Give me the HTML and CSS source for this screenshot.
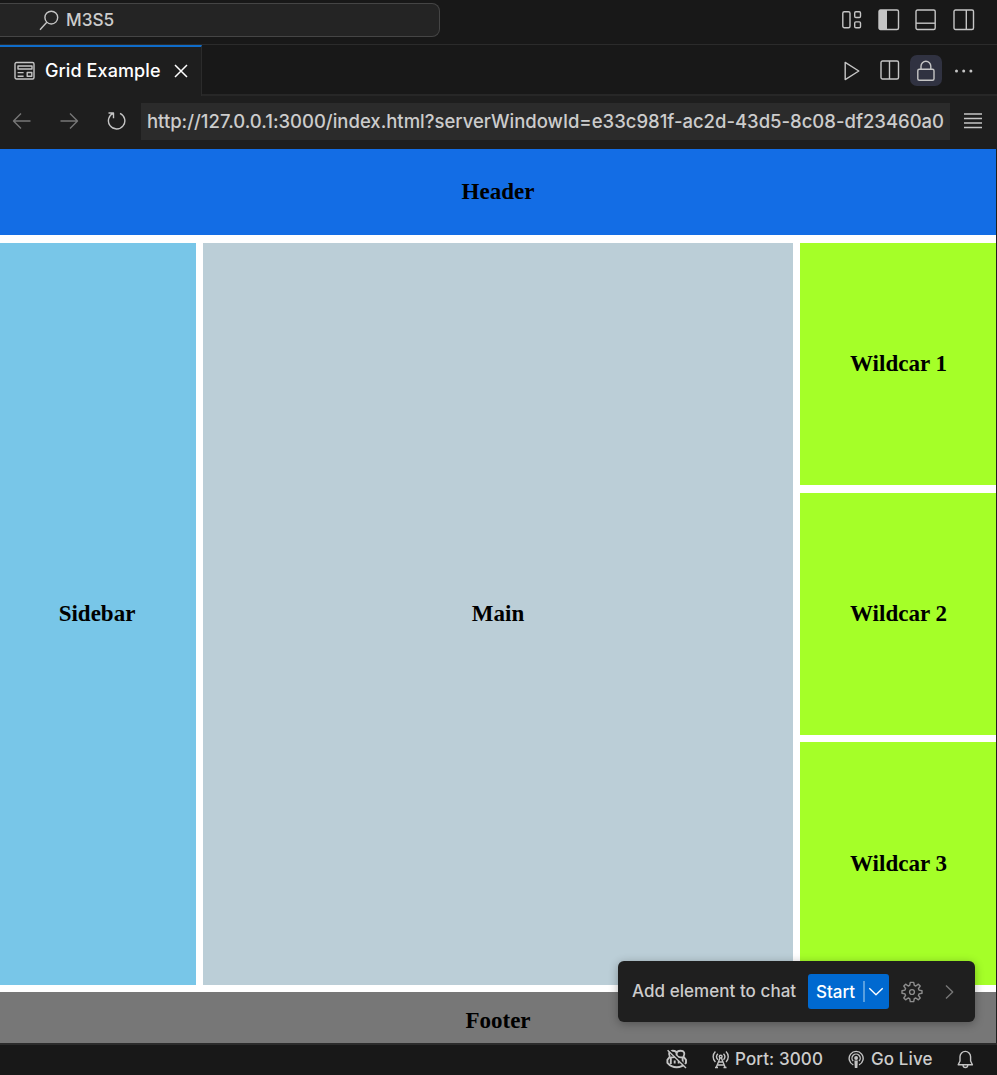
FILE: index.html
```html
<!DOCTYPE html>
<html lang="en">
<head>
<meta charset="utf-8">
<title>Grid Example</title>
<link rel="stylesheet" href="styles.css">
</head>
<body>
<div class="window">
  <header class="titlebar">
    <div class="command">
      <svg class="icon" width="20" height="21" viewBox="0 0 20 21"><circle cx="12.3" cy="7.6" r="6.4"/><path d="M7.8 12.2L1 19.7"/></svg>
      <span class="command-text">M3S5</span>
    </div>
    <div class="layout-icons">
      <svg class="icon" width="20" height="20" viewBox="0 0 20 20"><rect x=".8" y="1.7" width="7.2" height="16" rx="1.5"/><rect x="12.7" y="1.7" width="5.8" height="5.8" rx="1.2"/><rect x="12.7" y="11.9" width="5.8" height="5.8" rx="1.2"/></svg>
      <svg class="icon" width="22" height="22" viewBox="0 0 22 22"><rect x="1" y="1" width="19.5" height="19.5" rx="1.5"/><path class="solid" d="M1 1h8v19H1z"/></svg>
      <svg class="icon" width="22" height="22" viewBox="0 0 22 22"><rect x="1" y="1" width="19.2" height="19.5" rx="1.5"/><path d="M1 14.2h19"/></svg>
      <svg class="icon" width="22" height="22" viewBox="0 0 22 22"><rect x="1" y="1" width="19.5" height="19.5" rx="1.5"/><path d="M13.3 1v19"/></svg>
    </div>
  </header>

  <div class="tabs">
    <div class="tab">
      <svg class="icon" width="22" height="20" viewBox="0 0 22 20"><rect x="1" y="1.5" width="19" height="16.5" rx="1.5"/><path d="M4 5h14v3H4zM13.2 11.5h4.6v3.8h-4.6zM3.6 11.6h6M3.6 15.2h6"/></svg>
      <span class="tab-text">Grid Example</span>
      <svg class="icon close" width="14" height="14" viewBox="0 0 14 14"><path d="M1 1l12 12M13 1L1 13"/></svg>
    </div>
    <div class="tab-actions">
      <svg class="icon play" width="18" height="20" viewBox="0 0 18 20"><path d="M2.2 1.4v17.2L15.8 10z"/></svg>
      <svg class="icon split" width="20" height="20" viewBox="0 0 20 20"><rect x="1" y="1" width="17.5" height="18" rx="1.5"/><path d="M9.5 1v18"/></svg>
      <span class="lock">
        <svg class="icon" width="20" height="22" viewBox="0 0 20 22"><rect x="1.8" y="9.3" width="16.2" height="11" rx="1.5"/><path d="M5 9V6.2a4.9 5 0 0 1 9.8 0V9"/></svg>
      </span>
      <svg class="icon" width="20" height="6" viewBox="0 0 20 6"><circle class="dot" cx="2.5" cy="3" r="1.5"/><circle class="dot" cx="9.7" cy="3" r="1.5"/><circle class="dot" cx="16.9" cy="3" r="1.5"/></svg>
    </div>
  </div>

  <nav class="browser-bar">
    <svg class="icon dim" width="20" height="18" viewBox="0 0 20 18"><path d="M18.5 9H1.5M9 1.5L1.5 9 9 16.5"/></svg>
    <svg class="icon dim forward" width="20" height="18" viewBox="0 0 20 18"><path d="M1.5 9h17M11 1.5L18.5 9 11 16.5"/></svg>
    <svg class="icon reload" width="20" height="20" viewBox="0 0 20 20"><path d="M1.5 2H6.5V7.2M6.5 2.2A8.2 8.2 0 1 0 13 2.3"/></svg>
    <div class="address"><span class="address-text">http://127.0.0.1:3000/index.html?serverWindowId=e33c981f-ac2d-43d5-8c08-df23460a0</span></div>
    <svg class="icon menu" width="18" height="16" viewBox="0 0 18 16"><path d="M0 1h18M0 5.5h18M0 10h18M0 14.5h18"/></svg>
  </nav>

  <main class="page">
    <div class="cell page-header">Header</div>
    <div class="cell sidebar">Sidebar</div>
    <div class="cell content">Main</div>
    <div class="cell wild one">Wildcar 1</div>
    <div class="cell wild two">Wildcar 2</div>
    <div class="cell wild three">Wildcar 3</div>
    <div class="cell page-footer">Footer</div>
  </main>

  <footer class="status">
    <svg class="icon copilot" width="22" height="20" viewBox="0 0 22 20"><path d="M4 8C1.8 4 3.5 1.8 6.8 1.8 9.5 1.8 10.6 3 10.6 5S9 8.4 6.5 8.4 4 8 4 8M17.4 8c2.2-4 .5-6.2-2.8-6.2-2.8 0-4 1.2-4 3.2s1.6 3.4 4.1 3.4S17.4 8 17.4 8M3.6 8L1.4 10.8v3C4 16.8 7.2 18.2 10.7 18.2S17.4 16.8 20 13.8v-3L17.8 8M4.8 9v6M16.6 9v6M8.7 11.5v3M12.7 11.5v3"/><path class="cut" d="M2.3.3L21 18.2"/><path class="slash" d="M1.6 1.2L20 19"/></svg>
    <svg class="icon tower" width="18" height="19" viewBox="0 0 18 19"><path d="M3.4 1.5C.4 4.5.4 9 3.4 12M5.9 3.7C4.2 5.5 4.2 8 5.9 9.8M14 1.5c3 3 3 7.5 0 10.5M11.5 3.7c1.7 1.8 1.7 4.3 0 6.1M8 8L4.2 17.5M9.4 8l3.8 9.5M6.5 12h4.4M5.2 15h7M3 17.5h3M11.5 17.5h3"/><circle cx="8.7" cy="6.6" r="1.4"/></svg>
    <span class="status-text port">Port: 3000</span>
    <svg class="icon cast" width="17" height="19" viewBox="0 0 17 19"><path d="M5.3 14.8A7 7 0 1 1 11 14.8M5.2 11.1A4.1 4.1 0 1 1 11 11.1"/><circle class="dot" cx="8.1" cy="8" r="1.9"/><path class="solid" d="M6.4 10.5h3.4l-.4 7.5H6.8z"/></svg>
    <span class="status-text live">Go Live</span>
    <svg class="icon bell" width="17" height="19" viewBox="0 0 17 19"><path d="M1.2 14.8L3 11V6.8a5.3 5.4 0 0 1 10.6 0V11l1.8 3.8zM6 15.2c.2 3 4.6 3 4.8 0"/></svg>
  </footer>

  <div class="chat-popup">
    <span class="popup-text">Add element to chat</span>
    <div class="start"><span class="start-text">Start</span><span class="divider"></span>
      <svg class="icon chevron" width="16" height="9" viewBox="0 0 16 9"><path d="M1.3 1.3L8 7.7l6.7-6.4"/></svg>
    </div>
    <svg class="icon gear" width="22" height="22" viewBox="-11 -11 22 22"><path d="M-1.7-9.6h3.4l.6 3 1.5.6 2.6-1.8L8.2-6 6.4-3.4 7-1.9l3 .6v2.6l-3 .6-.6 1.5L8.2 6 6.4 7.8 3.8 6l-1.5.6-.6 3h-3.4l-.6-3L-3.8 6l-2.6 1.8L-8.2 6l1.8-2.6L-7 1.9l-3-.6v-2.6l3-.6.6-1.5L-8.2-6l1.8-1.8L-3.8-6l1.5-.6z"/><circle r="2.4"/></svg>
    <svg class="icon dim next" width="9" height="16" viewBox="0 0 9 16"><path d="M1 1.5L7.7 8 1 14.5"/></svg>
  </div>
</div>
</body>
</html>
```
FILE: styles.css
```css
* { box-sizing: border-box; }
body { margin: 0; background: #181818; }
.window {
  position: relative;
  width: 997px;
  height: 1075px;
  overflow: hidden;
  display: flex;
  flex-direction: column;
  background: #1e1e1e;
  color: #cccccc;
  font-family: Inter, "Liberation Sans", sans-serif;
  font-size: 18px;
  font-weight: 450;
  white-space: nowrap;
}
.icon {
  flex: none;
  display: block;
  fill: none;
  stroke: #c5c5c5;
  stroke-width: 1.4;
  stroke-linejoin: round;
}
.icon .solid, .icon .dot { fill: #c5c5c5; stroke: none; }
.icon.dim { stroke: #777777; }

.titlebar {
  height: 45px;
  flex: none;
  display: flex;
  justify-content: space-between;
  background: #181818;
  border-bottom: 1px solid #2b2b2b;
}
.command {
  width: 440px;
  height: 34px;
  margin-top: 3px;
  padding-left: 39px;
  display: flex;
  align-items: center;
  gap: 7px;
  background: #242424;
  border: 1px solid #454545;
  border-left: 0;
  border-radius: 0 8px 8px 0;
}
.command-text { padding-bottom: 1px; font-size: 17.2px; }
.layout-icons {
  height: 39px;
  padding-right: 22px;
  display: flex;
  align-items: center;
  gap: 15.7px;
}

.tabs { height: 51px; flex: none; display: flex; }
.tab {
  width: 202px;
  padding: 0 0 2px 14px;
  display: flex;
  align-items: center;
  border-top: 2px solid #0f6cc9;
  border-right: 1px solid #2b2b2b;
  color: #ffffff;
}
.tab-text { width: 129px; padding-left: 9px; font-size: 18px; letter-spacing: 0.1px; }
.close { margin-left: 9px; stroke: #ffffff; stroke-width: 1.5; }
.tab-actions {
  flex: 1;
  padding: 2px 23px 0 0;
  display: flex;
  align-items: center;
  justify-content: flex-end;
  background: #181818;
  border-bottom: 2px solid #272727;
}
.split { margin: 0 10.5px 2px 19px; }
.lock {
  width: 32px;
  height: 31px;
  margin-right: 12px;
  display: flex;
  align-items: center;
  justify-content: center;
  border-radius: 7px;
  background: #303241;
}

.browser-bar { height: 53px; flex: none; display: flex; align-items: center; padding: 0 0 4px 12px; }
.forward { margin-left: 27px; }
.reload { margin-left: 28px; }
.address {
  width: 809px;
  height: 37px;
  margin: 1px 0 0 14px;
  padding: 0 6px;
  background: #2b2b2b;
}
.address-text { display: block; overflow: hidden; line-height: 36px; font-size: 18.5px; letter-spacing: -0.01px; }
.menu { margin-left: 14px; }

.page {
  width: 996px;
  height: 894px;
  flex: none;
  display: grid;
  grid-template-columns: 196px 590px 196px;
  grid-template-rows: 86px 8px 242px 8px 242px 7px 243px 7px 51px;
  column-gap: 7px;
  background: #ffffff;
  color: #000000;
  font: bold 23px "Liberation Serif", serif;
}
.cell { display: flex; align-items: center; justify-content: center; }
.page-header { grid-area: 1 / 1 / 2 / 4; background: #136de5; }
.sidebar { grid-area: 3 / 1 / 8 / 2; padding-right: 2px; background: #78c6e8; }
.content { grid-area: 3 / 2 / 8 / 3; background: #bbced7; }
.wild { grid-column: 3; padding-left: 1px; background: #a5ff28; }
.one { grid-row: 3; }
.two { grid-row: 5; }
.three { grid-row: 7; }
.page-footer { grid-area: 9 / 1 / 10 / 4; padding-top: 6px; background: #777777; }

.status {
  height: 32px;
  flex: none;
  display: flex;
  align-items: center;
  padding: 0 0 2px 666px;
  background: #181818;
  border-top: 2px solid #2b2b2b;
}
.copilot { stroke-width: 1.9; }
.copilot .cut { stroke: #181818; }
.copilot .slash { stroke-width: 1.4; }
.tower { margin-left: 24px; }
.status-text { font-size: 17px; letter-spacing: 0.1px; }
.port { width: 107px; margin-left: 5px; }
.cast { margin-left: 6px; }
.live { width: 80px; margin-left: 6px; }
.bell { margin-left: 6px; }

.chat-popup {
  position: absolute;
  left: 618px;
  top: 961px;
  width: 357px;
  height: 61px;
  padding-left: 14px;
  display: flex;
  align-items: center;
  border-radius: 6px;
  background: #1f1f1f;
  box-shadow: 0 2px 10px rgba(0, 0, 0, 0.3);
}
.popup-text { width: 176px; padding-bottom: 1px; font-size: 17px; letter-spacing: 0.05px; }
.start {
  width: 81px;
  height: 35px;
  padding-left: 8px;
  display: flex;
  align-items: center;
  border-radius: 3px;
  background: #0069d0;
  color: #ffffff;
}
.start-text { width: 47px; font-size: 17px; font-weight: 500; }
.divider { width: 2px; height: 21px; background: #589fdf; }
.chevron { margin-left: 3px; stroke: #ffffff; }
.gear { margin-left: 12px; stroke: #8d8d8d; }
.next { margin-left: 22px; stroke: #919191; }
```
